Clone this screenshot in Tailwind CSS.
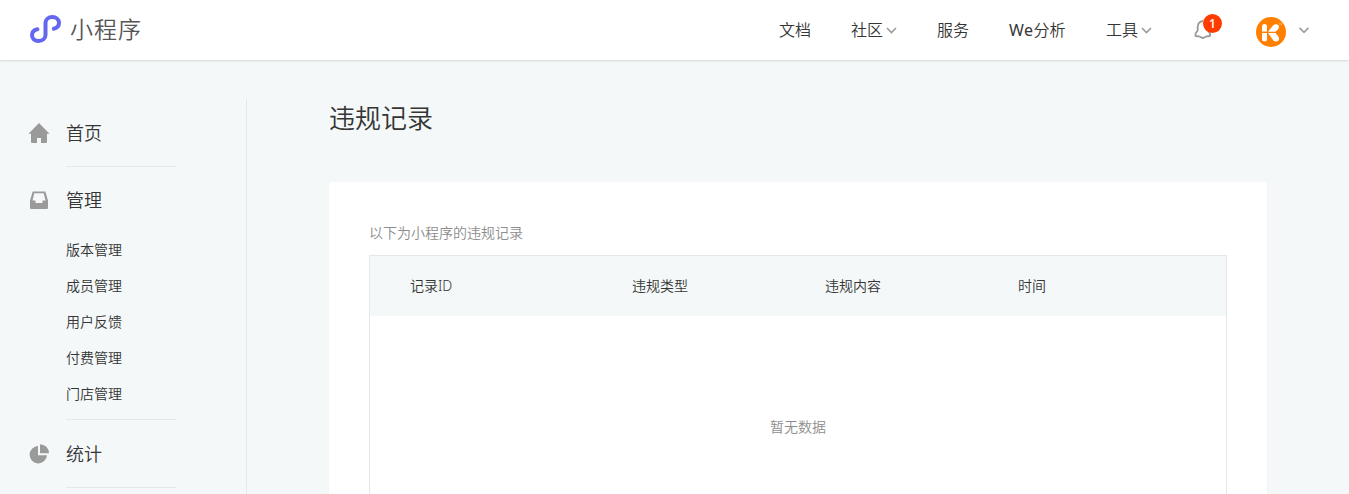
<!DOCTYPE html>
<html lang="zh-CN">
<head>
<meta charset="utf-8">
<title>小程序</title>
<script src="https://cdn.jsdelivr.net/npm/@tailwindcss/browser@4"></script>
</head>
<body class="h-[494px] overflow-hidden bg-[#f4f8f9] font-['Noto_Sans','Noto_Sans_CJK_SC',sans-serif] font-[350] text-[#353535]">
<header class="relative flex h-[60px] items-start bg-white text-base leading-6 shadow-[0_1px_2px_rgba(0,0,0,0.12)]">
  <svg class="ml-[28px] mt-[13px] h-8 w-9 shrink-0" viewBox="0 0 36 32" fill="none" stroke="#6467f0" stroke-width="4" stroke-linecap="round"><path d="M9.400 16.300C6 17 4 19.300 4 22.300C4 25.600 6.800 28 10.500 28C14.400 28 17.500 25.500 17.500 22V10C17.500 6.500 20.500 4 24.300 4C28.200 4 31 6.500 31 9.800C31 12.900 29 15 25.800 15.800"/></svg>
  <div class="ml-[6px] mt-[13px] w-[74px] whitespace-nowrap text-[23px] leading-8 tracking-[1px] text-[#555]">小程序</div>
  <nav class="ml-[635px] mt-[18px] flex whitespace-nowrap">
    <a class="w-[72px]">文档</a>
    <a class="flex w-[86px] items-center gap-[3px]">社区<svg class="h-[10px] w-[11px]" viewBox="0 0 11 10" fill="none" stroke="#9a9a9a" stroke-width="1.6"><path d="M1 3l4.5 4.5L10 3"/></svg></a>
    <a class="w-[72px]">服务</a>
    <a class="w-[97px]"><span class="font-normal tracking-[0.5px]">We</span>分析</a>
    <a class="flex w-[87px] items-center gap-[3px]">工具<svg class="h-[10px] w-[11px]" viewBox="0 0 11 10" fill="none" stroke="#9a9a9a" stroke-width="1.6"><path d="M1 3l4.5 4.5L10 3"/></svg></a>
  </nav>
  <div class="relative mt-[14px] h-[28px] w-[63px] shrink-0">
    <svg class="h-7 w-6" viewBox="0 0 24 28" fill="none" stroke="#9a9a9a" stroke-width="1.8" stroke-linejoin="round"><path d="M10 7C6.500 7.500 4.800 10 4.700 13V16.500L2.500 19.500V22L7 22.700 9.800 24.200 12.500 22.700 17 22V19.500L15 16.500V12"/></svg>
    <span class="absolute left-[10px] top-0 flex h-[19px] w-[19px] items-center justify-center rounded-full bg-[#ff3b00] font-['Open_Sans'] text-[12px] font-semibold leading-none text-white">1</span>
  </div>
  <svg class="mt-[17px] h-[30px] w-[30px] shrink-0" viewBox="0 0 30 30"><circle cx="15" cy="15" r="15" fill="#ff8000"/><g fill="#fff"><path d="M6 9.500a2.500 2.500 0 0 1 5 0v5H6zM6 16h5v6a2.500 2.500 0 0 1-5 0z"/><path d="M12 14.700L17 8.600C18.600 6.900 20.800 6.700 22.200 8C23.500 9.300 23.200 11.100 22 12.300L19.500 14.700z"/><path d="M12 15.900L17 23C18.600 24.800 20.800 25 22.200 23.700C23.500 22.400 23.200 20.400 22 19.100L19.500 15.900z"/></g><path d="M23 7h1.500M25.500 6v2" stroke="#ffc080"/></svg>
  <svg class="ml-[12px] mt-[25px] h-[10px] w-[12px]" viewBox="0 0 12 10" fill="none" stroke="#9a9a9a" stroke-width="1.6"><path d="M1.500 2.800L6 7.300l4.500-4.500"/></svg>
</header>
<div class="flex h-[434px]">
  <aside class="mt-[39px] h-[395px] w-[247px] shrink-0 border-r border-[#e4e8eb] pl-[28px] text-[18px] leading-7">
    <div class="flex h-[67px] items-center">
      <svg class="mt-px h-[22px] w-[22px]" viewBox="0 0 22 22" fill="#9a9a9a"><path d="M11 1l10.500 10.800H19V20a1 1 0 0 1-1 1h-5v-5H9v5H4a1 1 0 0 1-1-1v-8.200H.5z"/></svg>
      <span class="ml-4 pt-px">首页</span>
    </div>
    <div class="ml-[38px] h-px w-[110px] bg-[#e4e8eb]"></div>
    <div class="flex h-[66px] items-center">
      <svg class="h-[22px] w-[22px]" viewBox="0 0 22 22" fill="#9a9a9a" fill-rule="evenodd"><path d="M4.700 2.500h12.600L20 11.500V19a1 1 0 0 1-1 1H3a1 1 0 0 1-1-1v-7.500zM6.300 4.300L4.500 11.500h3V14h7v-2.500h3L15.700 4.300z"/></svg>
      <span class="ml-4">管理</span>
    </div>
    <div class="-mt-px ml-[38px] h-[187px] text-sm leading-9">
      <div>版本管理</div><div>成员管理</div><div>用户反馈</div><div>付费管理</div><div>门店管理</div>
    </div>
    <div class="ml-[38px] h-px w-[110px] bg-[#e4e8eb]"></div>
    <div class="flex h-[67px] items-center">
      <svg class="h-[22px] w-[22px]" viewBox="0 0 22 22" fill="#9a9a9a"><path d="M10 3v9.200h9A8.700 8.700 0 1 1 10 3z"/><path d="M12 1.200a9 9 0 0 1 9 9h-9z"/></svg>
      <span class="ml-4">统计</span>
    </div>
    <div class="ml-[38px] h-px w-[110px] bg-[#e4e8eb]"></div>
  </aside>
  <main class="ml-[82px] w-[938px]">
    <h1 class="mt-[38px] h-[84px] text-[26px] font-[350] leading-10">违规记录</h1>
    <section class="h-[312px] rounded-t-[3px] bg-white px-10 pt-[40px] shadow-[0_1px_4px_rgba(0,0,0,0.025)]">
      <p class="h-[33px] text-sm leading-[22px] text-[#8d8d8d]">以下为小程序的违规记录</p>
      <div class="h-[239px] border border-b-0 border-[#e4e8eb]">
        <div class="flex h-[60px] items-center bg-[#f4f8f9] pl-10 text-sm">
          <div class="w-[222px]">记录ID</div><div class="w-[193px]">违规类型</div><div class="w-[193px]">违规内容</div><div>时间</div>
        </div>
        <div class="pt-[101px] text-center text-sm leading-5 text-[#8d8d8d]">暂无数据</div>
      </div>
    </section>
  </main>
</div>
</body>
</html>
